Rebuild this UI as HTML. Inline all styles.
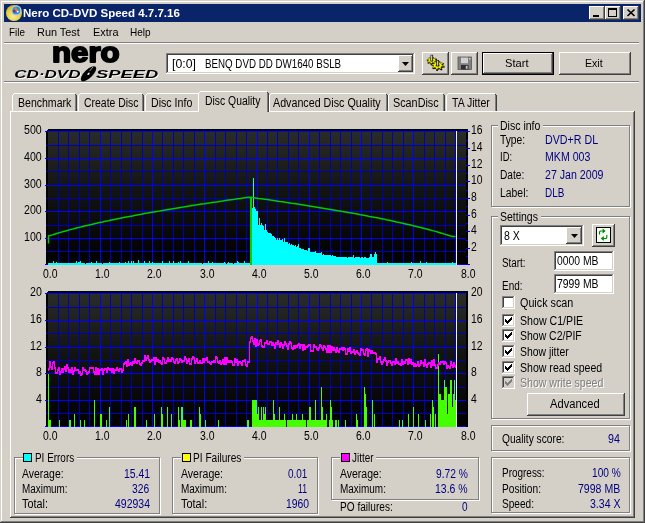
<!DOCTYPE html>
<html><head><meta charset="utf-8"><title>Nero CD-DVD Speed 4.7.7.16</title>
<style>
html,body{margin:0;padding:0;background:#d4d0c8}
#w{will-change:transform;position:relative;width:645px;height:523px;overflow:hidden;background:#d4d0c8;font-family:"Liberation Sans",Arial,sans-serif}
#w div,#w .a{position:absolute}
#w .a{display:block;overflow:visible}
.t{position:absolute;white-space:nowrap;transform-origin:0 0;display:block}
</style></head><body>
<div id="w">
<div style="left:0px;top:0px;width:645px;height:1px;background:#d4d0c8;"></div>
<div style="left:0px;top:0px;width:1px;height:523px;background:#d4d0c8;"></div>
<div style="left:1px;top:1px;width:643px;height:1px;background:#fff;"></div>
<div style="left:1px;top:1px;width:1px;height:521px;background:#fff;"></div>
<div style="left:0px;top:522px;width:645px;height:1px;background:#404040;"></div>
<div style="left:644px;top:0px;width:1px;height:523px;background:#404040;"></div>
<div style="left:1px;top:521px;width:643px;height:1px;background:#808080;"></div>
<div style="left:643px;top:1px;width:1px;height:521px;background:#808080;"></div>
<div style="left:4px;top:4px;width:637px;height:18px;background:#0a246a;"></div>
<svg class="a" style="left:4px;top:4px" width="20" height="18" viewBox="4 4 20 18">
<defs><radialGradient id="gd" cx="0.45" cy="0.7" r="0.7"><stop offset="0" stop-color="#f6eca0"/><stop offset="0.55" stop-color="#e9d43a"/><stop offset="1" stop-color="#c9b21c"/></radialGradient></defs>
<circle cx="14" cy="13" r="8" fill="url(#gd)"/>
<circle cx="16.3" cy="10.4" r="4.6" fill="#2a8fe0" stroke="#c4c8d4" stroke-width="1.3"/>
<path d="M15 7.5L17.5 11.5" stroke="#f07840" stroke-width="1.6"/><circle cx="14.2" cy="11.2" r="1.2" fill="#b02018"/>
<circle cx="18.2" cy="8.2" r="1" fill="#30a040"/><circle cx="17.8" cy="11.6" r="0.9" fill="#fff"/>
</svg>
<span class="t " style="left:22.80px;top:6px;font-size:11.5px;line-height:14px;color:#fff;font-weight:700;transform:scaleX(1.0018);">Nero CD-DVD Speed 4.7.7.16</span>
<div style="left:589px;top:6px;width:16px;height:14px;background:#d4d0c8;"></div>
<div style="left:589px;top:6px;width:16px;height:1px;background:#fff;"></div>
<div style="left:589px;top:6px;width:1px;height:14px;background:#fff;"></div>
<div style="left:589px;top:19px;width:16px;height:1px;background:#404040;"></div>
<div style="left:604px;top:6px;width:1px;height:14px;background:#404040;"></div>
<div style="left:590px;top:18px;width:14px;height:1px;background:#808080;"></div>
<div style="left:603px;top:7px;width:1px;height:12px;background:#808080;"></div>
<div style="left:605px;top:6px;width:16px;height:14px;background:#d4d0c8;"></div>
<div style="left:605px;top:6px;width:16px;height:1px;background:#fff;"></div>
<div style="left:605px;top:6px;width:1px;height:14px;background:#fff;"></div>
<div style="left:605px;top:19px;width:16px;height:1px;background:#404040;"></div>
<div style="left:620px;top:6px;width:1px;height:14px;background:#404040;"></div>
<div style="left:606px;top:18px;width:14px;height:1px;background:#808080;"></div>
<div style="left:619px;top:7px;width:1px;height:12px;background:#808080;"></div>
<div style="left:623px;top:6px;width:16px;height:14px;background:#d4d0c8;"></div>
<div style="left:623px;top:6px;width:16px;height:1px;background:#fff;"></div>
<div style="left:623px;top:6px;width:1px;height:14px;background:#fff;"></div>
<div style="left:623px;top:19px;width:16px;height:1px;background:#404040;"></div>
<div style="left:638px;top:6px;width:1px;height:14px;background:#404040;"></div>
<div style="left:624px;top:18px;width:14px;height:1px;background:#808080;"></div>
<div style="left:637px;top:7px;width:1px;height:12px;background:#808080;"></div>
<svg class="a" style="left:589px;top:6px" width="50" height="14" viewBox="589 6 50 14">
<rect x="593" y="15" width="6" height="2" fill="#000"/>
<path d="M608 8h9v9h-9zM609 10v6h7v-6z" fill="#000" fill-rule="evenodd"/>
<path d="M627.5 9.5l7 6.5M634.5 9.5l-7 6.5" stroke="#000" stroke-width="1.7" fill="none"/>
</svg>
<span class="t " style="left:8.90px;top:25px;font-size:11px;line-height:14px;color:#000;transform:scaleX(0.8958);">File</span>
<span class="t " style="left:37.20px;top:25px;font-size:11px;line-height:14px;color:#000;transform:scaleX(0.9919);">Run Test</span>
<span class="t " style="left:92.50px;top:25px;font-size:11px;line-height:14px;color:#000;transform:scaleX(0.9912);">Extra</span>
<span class="t " style="left:130.30px;top:25px;font-size:11px;line-height:14px;color:#000;transform:scaleX(0.9105);">Help</span>
<div style="left:4px;top:42px;width:635px;height:1px;background:#808080;"></div>
<div style="left:4px;top:43px;width:635px;height:1px;background:#fff;"></div>
<div style="left:4px;top:81px;width:635px;height:1px;background:#808080;"></div>
<div style="left:4px;top:82px;width:635px;height:1px;background:#fff;"></div>
<svg class="a" style="left:10px;top:44px" width="152" height="38" viewBox="10 44 152 38"><text x="52" y="62.1" font-family="Liberation Sans,sans-serif" font-weight="700" font-size="28" textLength="67.6" lengthAdjust="spacingAndGlyphs" fill="#000" stroke="#000" stroke-width="1.9" stroke-linejoin="round">nero</text><text x="15.200000000000001" y="78.8" font-family="Liberation Sans,sans-serif" font-weight="700" font-style="italic" font-size="11" textLength="66.2" lengthAdjust="spacingAndGlyphs" fill="#fff">CD·DVD</text><text x="14.3" y="78" font-family="Liberation Sans,sans-serif" font-weight="700" font-style="italic" font-size="11" textLength="66.2" lengthAdjust="spacingAndGlyphs" fill="#000">CD·DVD</text><text x="96.9" y="78.8" font-family="Liberation Sans,sans-serif" font-weight="700" font-style="italic" font-size="11" textLength="62.2" lengthAdjust="spacingAndGlyphs" fill="#fff">SPEED</text><text x="96.0" y="78" font-family="Liberation Sans,sans-serif" font-weight="700" font-style="italic" font-size="11" textLength="62.2" lengthAdjust="spacingAndGlyphs" fill="#000">SPEED</text><g transform="translate(88.5 73.8) rotate(-44)"><ellipse rx="10" ry="4.1" fill="#000"/><ellipse rx="1.5" ry="0.9" fill="#e8e8e8"/><path d="M2.5 -1.2L8 -1.8" stroke="#c8c8c8" stroke-width="0.7"/></g></svg>
<div style="left:166px;top:53px;width:249px;height:21px;background:#fff;"></div>
<div style="left:166px;top:53px;width:249px;height:1px;background:#808080;"></div>
<div style="left:166px;top:53px;width:1px;height:21px;background:#808080;"></div>
<div style="left:167px;top:54px;width:247px;height:1px;background:#404040;"></div>
<div style="left:167px;top:54px;width:1px;height:19px;background:#404040;"></div>
<div style="left:166px;top:73px;width:249px;height:1px;background:#fff;"></div>
<div style="left:414px;top:53px;width:1px;height:21px;background:#fff;"></div>
<div style="left:167px;top:72px;width:247px;height:1px;background:#d4d0c8;"></div>
<div style="left:413px;top:54px;width:1px;height:19px;background:#d4d0c8;"></div>
<div style="left:398px;top:55px;width:15px;height:17px;background:#d4d0c8;"></div>
<div style="left:398px;top:55px;width:15px;height:1px;background:#fff;"></div>
<div style="left:398px;top:55px;width:1px;height:17px;background:#fff;"></div>
<div style="left:398px;top:71px;width:15px;height:1px;background:#404040;"></div>
<div style="left:412px;top:55px;width:1px;height:17px;background:#404040;"></div>
<div style="left:399px;top:70px;width:13px;height:1px;background:#808080;"></div>
<div style="left:411px;top:56px;width:1px;height:15px;background:#808080;"></div>
<svg class="a" style="left:402.0px;top:62px" width="7" height="4"><path d="M0 0H7L3.5 4Z" fill="#000"/></svg>
<span class="t " style="left:172.20px;top:56px;font-size:12.5px;line-height:16px;color:#000;transform:scaleX(0.9805);">[0:0]</span>
<span class="t " style="left:205.40px;top:56px;font-size:12.5px;line-height:16px;color:#000;transform:scaleX(0.7805);">BENQ DVD DD DW1640 BSLB</span>
<div style="left:422px;top:52px;width:27px;height:23px;background:#d4d0c8;"></div>
<div style="left:422px;top:52px;width:27px;height:1px;background:#fff;"></div>
<div style="left:422px;top:52px;width:1px;height:23px;background:#fff;"></div>
<div style="left:422px;top:74px;width:27px;height:1px;background:#404040;"></div>
<div style="left:448px;top:52px;width:1px;height:23px;background:#404040;"></div>
<div style="left:423px;top:73px;width:25px;height:1px;background:#808080;"></div>
<div style="left:447px;top:53px;width:1px;height:21px;background:#808080;"></div>
<div style="left:451px;top:52px;width:27px;height:23px;background:#d4d0c8;"></div>
<div style="left:451px;top:52px;width:27px;height:1px;background:#fff;"></div>
<div style="left:451px;top:52px;width:1px;height:23px;background:#fff;"></div>
<div style="left:451px;top:74px;width:27px;height:1px;background:#404040;"></div>
<div style="left:477px;top:52px;width:1px;height:23px;background:#404040;"></div>
<div style="left:452px;top:73px;width:25px;height:1px;background:#808080;"></div>
<div style="left:476px;top:53px;width:1px;height:21px;background:#808080;"></div>
<svg class="a" style="left:422px;top:52px" width="56" height="23" viewBox="422 52 56 23"><path d="M437.88 61.52L437.62 62.46L435.79 62.47L435.27 63.03L435.93 64.25L434.81 64.77L433.51 63.86L432.58 63.99L431.85 65.19L430.54 65.00L430.52 63.69L429.74 63.32L428.04 63.79L427.30 63.00L428.57 62.06L428.39 61.40L426.72 60.88L426.98 59.94L428.81 59.93L429.33 59.37L428.67 58.15L429.79 57.63L431.09 58.54L432.02 58.41L432.75 57.21L434.06 57.40L434.08 58.71L434.86 59.08L436.56 58.61L437.30 59.40L436.03 60.34L436.21 61.00Z" fill="#101000"/><path d="M436.68 60.66L436.45 61.44L434.85 61.45L434.40 61.91L434.98 62.91L434.00 63.35L432.86 62.60L432.05 62.70L431.41 63.69L430.26 63.53L430.24 62.46L429.56 62.15L428.07 62.54L427.42 61.88L428.54 61.11L428.38 60.57L426.92 60.14L427.15 59.36L428.75 59.35L429.20 58.89L428.62 57.89L429.60 57.45L430.74 58.20L431.55 58.10L432.19 57.11L433.34 57.27L433.36 58.34L434.04 58.65L435.53 58.26L436.18 58.92L435.06 59.69L435.22 60.23Z" fill="#f4f000" stroke="#3a3a00" stroke-width="0.5"/><ellipse cx="431.8" cy="60.4" rx="1.57" ry="1.06" fill="#6a6a00"/><rect x="430.90" y="55.20" width="1.8" height="5.8" fill="#8a8a8a" stroke="#181818" stroke-width="0.7"/><rect x="431.20" y="55.60" width="0.7" height="5.0" fill="#f0f0f0"/><path d="M444.88 66.48L444.56 67.61L442.38 67.63L441.75 68.30L442.54 69.75L441.21 70.39L439.64 69.30L438.54 69.45L437.66 70.88L436.09 70.66L436.06 69.09L435.13 68.64L433.10 69.21L432.21 68.25L433.74 67.13L433.52 66.34L431.52 65.72L431.84 64.59L434.02 64.57L434.65 63.90L433.86 62.45L435.19 61.81L436.76 62.90L437.86 62.75L438.74 61.32L440.31 61.54L440.34 63.11L441.27 63.56L443.30 62.99L444.19 63.95L442.66 65.07L442.88 65.86Z" fill="#101000"/><path d="M443.68 65.63L443.40 66.59L441.44 66.61L440.88 67.18L441.59 68.42L440.39 68.96L438.99 68.03L438.01 68.16L437.22 69.39L435.81 69.19L435.79 67.86L434.95 67.47L433.13 67.96L432.34 67.14L433.70 66.18L433.51 65.51L431.72 64.97L432.00 64.01L433.96 63.99L434.52 63.42L433.81 62.18L435.01 61.64L436.41 62.57L437.39 62.44L438.18 61.21L439.59 61.41L439.61 62.74L440.45 63.13L442.27 62.64L443.06 63.46L441.70 64.42L441.89 65.09Z" fill="#f4f000" stroke="#3a3a00" stroke-width="0.5"/><ellipse cx="437.7" cy="65.3" rx="1.92" ry="1.31" fill="#6a6a00"/><rect x="436.70" y="60.50" width="2.0" height="5.4" fill="#8a8a8a" stroke="#181818" stroke-width="0.7"/><rect x="437.00" y="60.90" width="0.7" height="4.6000000000000005" fill="#f0f0f0"/><rect x="458" y="57" width="13.5" height="12.5" fill="#808080" stroke="#585858" stroke-width="0.8"/><rect x="461" y="57.6" width="7" height="5.6" fill="#d0d0d0"/><rect x="461" y="65" width="7.5" height="4.5" fill="#303030"/><rect x="465.8" y="65.8" width="1.8" height="3" fill="#c0c0c0"/><rect x="469.2" y="58" width="1.2" height="1.6" fill="#d8d8d8"/></svg>
<div style="left:482px;top:52px;width:72px;height:23px;background:#000;"></div>
<div style="left:483px;top:53px;width:70px;height:21px;background:#d4d0c8;"></div>
<div style="left:483px;top:53px;width:70px;height:1px;background:#fff;"></div>
<div style="left:483px;top:53px;width:1px;height:21px;background:#fff;"></div>
<div style="left:483px;top:73px;width:70px;height:1px;background:#404040;"></div>
<div style="left:552px;top:53px;width:1px;height:21px;background:#404040;"></div>
<div style="left:484px;top:72px;width:68px;height:1px;background:#808080;"></div>
<div style="left:551px;top:54px;width:1px;height:19px;background:#808080;"></div>
<span class="t " style="left:505.20px;top:56px;font-size:11px;line-height:14px;color:#000;transform:scaleX(1.0108);">Start</span>
<div style="left:559px;top:52px;width:72px;height:23px;background:#d4d0c8;"></div>
<div style="left:559px;top:52px;width:72px;height:1px;background:#fff;"></div>
<div style="left:559px;top:52px;width:1px;height:23px;background:#fff;"></div>
<div style="left:559px;top:74px;width:72px;height:1px;background:#404040;"></div>
<div style="left:630px;top:52px;width:1px;height:23px;background:#404040;"></div>
<div style="left:560px;top:73px;width:70px;height:1px;background:#808080;"></div>
<div style="left:629px;top:53px;width:1px;height:21px;background:#808080;"></div>
<span class="t " style="left:585.20px;top:56px;font-size:11px;line-height:14px;color:#000;transform:scaleX(0.9633);">Exit</span>
<div style="left:10px;top:111px;width:1px;height:407px;background:#fff;"></div>
<div style="left:10px;top:111px;width:624px;height:1px;background:#fff;"></div>
<div style="left:633px;top:112px;width:1px;height:405px;background:#808080;"></div>
<div style="left:634px;top:111px;width:1px;height:407px;background:#404040;"></div>
<div style="left:11px;top:516px;width:623px;height:1px;background:#808080;"></div>
<div style="left:10px;top:517px;width:625px;height:1px;background:#404040;"></div>
<div style="left:12px;top:93px;width:65px;height:18px;background:#d4d0c8;"></div>
<div style="left:12px;top:95px;width:1px;height:16px;background:#fff;"></div>
<div style="left:13px;top:94px;width:1px;height:1px;background:#fff;"></div>
<div style="left:14px;top:93px;width:61px;height:1px;background:#fff;"></div>
<div style="left:75px;top:95px;width:1px;height:16px;background:#808080;"></div>
<div style="left:76px;top:95px;width:1px;height:16px;background:#404040;"></div>
<div style="left:75px;top:94px;width:1px;height:1px;background:#404040;"></div>
<span class="t " style="left:18.10px;top:95px;font-size:12.5px;line-height:16px;color:#000;transform:scaleX(0.8426);">Benchmark</span>
<div style="left:78px;top:93px;width:66px;height:18px;background:#d4d0c8;"></div>
<div style="left:78px;top:95px;width:1px;height:16px;background:#fff;"></div>
<div style="left:79px;top:94px;width:1px;height:1px;background:#fff;"></div>
<div style="left:80px;top:93px;width:62px;height:1px;background:#fff;"></div>
<div style="left:142px;top:95px;width:1px;height:16px;background:#808080;"></div>
<div style="left:143px;top:95px;width:1px;height:16px;background:#404040;"></div>
<div style="left:142px;top:94px;width:1px;height:1px;background:#404040;"></div>
<span class="t " style="left:84.00px;top:95px;font-size:12.5px;line-height:16px;color:#000;transform:scaleX(0.8352);">Create Disc</span>
<div style="left:145px;top:93px;width:55px;height:18px;background:#d4d0c8;"></div>
<div style="left:145px;top:95px;width:1px;height:16px;background:#fff;"></div>
<div style="left:146px;top:94px;width:1px;height:1px;background:#fff;"></div>
<div style="left:147px;top:93px;width:51px;height:1px;background:#fff;"></div>
<div style="left:198px;top:95px;width:1px;height:16px;background:#808080;"></div>
<div style="left:199px;top:95px;width:1px;height:16px;background:#404040;"></div>
<div style="left:198px;top:94px;width:1px;height:1px;background:#404040;"></div>
<span class="t " style="left:151.20px;top:95px;font-size:12.5px;line-height:16px;color:#000;transform:scaleX(0.8494);">Disc Info</span>
<div style="left:269px;top:93px;width:119px;height:18px;background:#d4d0c8;"></div>
<div style="left:269px;top:95px;width:1px;height:16px;background:#fff;"></div>
<div style="left:270px;top:94px;width:1px;height:1px;background:#fff;"></div>
<div style="left:271px;top:93px;width:115px;height:1px;background:#fff;"></div>
<div style="left:386px;top:95px;width:1px;height:16px;background:#808080;"></div>
<div style="left:387px;top:95px;width:1px;height:16px;background:#404040;"></div>
<div style="left:386px;top:94px;width:1px;height:1px;background:#404040;"></div>
<span class="t " style="left:272.50px;top:95px;font-size:12.5px;line-height:16px;color:#000;transform:scaleX(0.8565);">Advanced Disc Quality</span>
<div style="left:388px;top:93px;width:57px;height:18px;background:#d4d0c8;"></div>
<div style="left:388px;top:95px;width:1px;height:16px;background:#fff;"></div>
<div style="left:389px;top:94px;width:1px;height:1px;background:#fff;"></div>
<div style="left:390px;top:93px;width:53px;height:1px;background:#fff;"></div>
<div style="left:443px;top:95px;width:1px;height:16px;background:#808080;"></div>
<div style="left:444px;top:95px;width:1px;height:16px;background:#404040;"></div>
<div style="left:443px;top:94px;width:1px;height:1px;background:#404040;"></div>
<span class="t " style="left:392.90px;top:95px;font-size:12.5px;line-height:16px;color:#000;transform:scaleX(0.8645);">ScanDisc</span>
<div style="left:446px;top:93px;width:51px;height:18px;background:#d4d0c8;"></div>
<div style="left:446px;top:95px;width:1px;height:16px;background:#fff;"></div>
<div style="left:447px;top:94px;width:1px;height:1px;background:#fff;"></div>
<div style="left:448px;top:93px;width:47px;height:1px;background:#fff;"></div>
<div style="left:495px;top:95px;width:1px;height:16px;background:#808080;"></div>
<div style="left:496px;top:95px;width:1px;height:16px;background:#404040;"></div>
<div style="left:495px;top:94px;width:1px;height:1px;background:#404040;"></div>
<span class="t " style="left:451.50px;top:95px;font-size:12.5px;line-height:16px;color:#000;transform:scaleX(0.8401);">TA Jitter</span>
<div style="left:198px;top:91px;width:71px;height:21px;background:#d4d0c8;"></div>
<div style="left:198px;top:93px;width:1px;height:19px;background:#fff;"></div>
<div style="left:199px;top:92px;width:1px;height:1px;background:#fff;"></div>
<div style="left:200px;top:91px;width:67px;height:1px;background:#fff;"></div>
<div style="left:267px;top:93px;width:1px;height:19px;background:#808080;"></div>
<div style="left:268px;top:93px;width:1px;height:19px;background:#404040;"></div>
<div style="left:267px;top:92px;width:1px;height:1px;background:#404040;"></div>
<span class="t " style="left:205.20px;top:93px;font-size:12.5px;line-height:16px;color:#000;transform:scaleX(0.8300);">Disc Quality</span>
<svg class="a" style="left:0;top:120px" width="490" height="325" viewBox="0 120 490 325"><defs><linearGradient id="pg" x1="0" y1="0" x2="0" y2="1"><stop offset="0" stop-color="#2a2c2a"/><stop offset="0.45" stop-color="#121412"/><stop offset="1" stop-color="#000"/></linearGradient></defs><rect x="46" y="129.0" width="422" height="136.0" fill="#000"/><rect x="48" y="131.0" width="418" height="133.5" fill="url(#pg)"/><path d="M46 129.0h2v1h-1v1h-1z" fill="#d4d0c8"/><g shape-rendering="crispEdges" fill="none" stroke-width="1"><path d="M58.5 131.0V265.0M68.5 131.0V265.0M79.5 131.0V265.0M89.5 131.0V265.0M110.5 131.0V265.0M121.5 131.0V265.0M131.5 131.0V265.0M142.5 131.0V265.0M162.5 131.0V265.0M173.5 131.0V265.0M183.5 131.0V265.0M194.5 131.0V265.0M215.5 131.0V265.0M225.5 131.0V265.0M236.5 131.0V265.0M246.5 131.0V265.0M267.5 131.0V265.0M277.5 131.0V265.0M288.5 131.0V265.0M298.5 131.0V265.0M319.5 131.0V265.0M330.5 131.0V265.0M340.5 131.0V265.0M351.5 131.0V265.0M371.5 131.0V265.0M382.5 131.0V265.0M392.5 131.0V265.0M403.5 131.0V265.0M424.5 131.0V265.0M434.5 131.0V265.0M445.5 131.0V265.0M455.5 131.0V265.0M46 145.5H466M46 171.5H466M46 198.5H466M46 225.5H466M46 251.5H466" stroke="#0000b8"/><path d="M100.5 131.0V265.0M152.5 131.0V265.0M204.5 131.0V265.0M257.5 131.0V265.0M309.5 131.0V265.0M361.5 131.0V265.0M413.5 131.0V265.0M45 131.5H466M45 158.5H466M45 185.5H466M45 211.5H466M45 238.5H466M45 264.5H466" stroke="#0000ff"/></g><rect x="46" y="291.0" width="422" height="136.0" fill="#000"/><rect x="48" y="293.0" width="418" height="133.5" fill="url(#pg)"/><path d="M46 291.0h2v1h-1v1h-1z" fill="#d4d0c8"/><g shape-rendering="crispEdges" fill="none" stroke-width="1"><path d="M58.5 293.0V427.0M68.5 293.0V427.0M79.5 293.0V427.0M89.5 293.0V427.0M110.5 293.0V427.0M121.5 293.0V427.0M131.5 293.0V427.0M142.5 293.0V427.0M162.5 293.0V427.0M173.5 293.0V427.0M183.5 293.0V427.0M194.5 293.0V427.0M215.5 293.0V427.0M225.5 293.0V427.0M236.5 293.0V427.0M246.5 293.0V427.0M267.5 293.0V427.0M277.5 293.0V427.0M288.5 293.0V427.0M298.5 293.0V427.0M319.5 293.0V427.0M330.5 293.0V427.0M340.5 293.0V427.0M351.5 293.0V427.0M371.5 293.0V427.0M382.5 293.0V427.0M392.5 293.0V427.0M403.5 293.0V427.0M424.5 293.0V427.0M434.5 293.0V427.0M445.5 293.0V427.0M455.5 293.0V427.0M46 307.5H466M46 333.5H466M46 360.5H466M46 387.5H466M46 413.5H466" stroke="#0000b8"/><path d="M100.5 293.0V427.0M152.5 293.0V427.0M204.5 293.0V427.0M257.5 293.0V427.0M309.5 293.0V427.0M361.5 293.0V427.0M413.5 293.0V427.0M45 293.5H466M45 320.5H466M45 347.5H466M45 373.5H466M45 400.5H466M45 426.5H466" stroke="#0000ff"/></g><path d="M48 265.0v-2.2h1v2.2zM49 265.0v-2.2h1v2.2zM50 265.0v-2.0h1v2.0zM51 265.0v-2.2h1v2.2zM52 265.0v-2.3h1v2.3zM53 265.0v-4.4h1v4.4zM54 265.0v-2.1h1v2.1zM55 265.0v-2.3h1v2.3zM56 265.0v-3.1h1v3.1zM57 265.0v-2.2h1v2.2zM58 265.0v-2.4h1v2.4zM59 265.0v-2.2h1v2.2zM60 265.0v-2.4h1v2.4zM61 265.0v-2.1h1v2.1zM62 265.0v-2.3h1v2.3zM63 265.0v-2.3h1v2.3zM64 265.0v-2.4h1v2.4zM65 265.0v-2.0h1v2.0zM66 265.0v-2.4h1v2.4zM67 265.0v-2.0h1v2.0zM68 265.0v-2.0h1v2.0zM69 265.0v-2.2h1v2.2zM70 265.0v-2.3h1v2.3zM71 265.0v-2.1h1v2.1zM72 265.0v-2.4h1v2.4zM73 265.0v-2.1h1v2.1zM74 265.0v-2.0h1v2.0zM75 265.0v-2.4h1v2.4zM76 265.0v-4.3h1v4.3zM77 265.0v-2.4h1v2.4zM78 265.0v-3.2h1v3.2zM79 265.0v-3.0h1v3.0zM80 265.0v-4.1h1v4.1zM81 265.0v-2.1h1v2.1zM82 265.0v-2.4h1v2.4zM83 265.0v-2.1h1v2.1zM84 265.0v-2.4h1v2.4zM85 265.0v-1.2h1v1.2zM86 265.0v-2.2h1v2.2zM87 265.0v-2.1h1v2.1zM88 265.0v-2.2h1v2.2zM89 265.0v-2.4h1v2.4zM90 265.0v-2.4h1v2.4zM91 265.0v-3.0h1v3.0zM92 265.0v-2.3h1v2.3zM93 265.0v-2.4h1v2.4zM94 265.0v-2.1h1v2.1zM95 265.0v-2.4h1v2.4zM96 265.0v-4.0h1v4.0zM97 265.0v-2.3h1v2.3zM98 265.0v-2.2h1v2.2zM99 265.0v-2.2h1v2.2zM100 265.0v-2.1h1v2.1zM101 265.0v-2.1h1v2.1zM102 265.0v-1.1h1v1.1zM103 265.0v-2.4h1v2.4zM104 265.0v-2.2h1v2.2zM105 265.0v-2.1h1v2.1zM106 265.0v-2.1h1v2.1zM107 265.0v-2.2h1v2.2zM108 265.0v-2.2h1v2.2zM109 265.0v-2.6h1v2.6zM110 265.0v-2.4h1v2.4zM111 265.0v-2.3h1v2.3zM112 265.0v-2.4h1v2.4zM113 265.0v-2.1h1v2.1zM114 265.0v-2.3h1v2.3zM115 265.0v-2.2h1v2.2zM116 265.0v-2.2h1v2.2zM117 265.0v-2.4h1v2.4zM118 265.0v-2.4h1v2.4zM119 265.0v-3.3h1v3.3zM120 265.0v-2.4h1v2.4zM121 265.0v-2.3h1v2.3zM122 265.0v-2.1h1v2.1zM123 265.0v-2.4h1v2.4zM124 265.0v-2.2h1v2.2zM125 265.0v-2.8h1v2.8zM126 265.0v-2.2h1v2.2zM127 265.0v-2.4h1v2.4zM128 265.0v-4.0h1v4.0zM129 265.0v-2.2h1v2.2zM130 265.0v-2.1h1v2.1zM131 265.0v-3.8h1v3.8zM132 265.0v-2.4h1v2.4zM133 265.0v-4.3h1v4.3zM134 265.0v-2.3h1v2.3zM135 265.0v-2.2h1v2.2zM136 265.0v-2.0h1v2.0zM137 265.0v-2.3h1v2.3zM138 265.0v-5.4h1v5.4zM139 265.0v-2.3h1v2.3zM140 265.0v-2.1h1v2.1zM141 265.0v-2.4h1v2.4zM142 265.0v-2.4h1v2.4zM143 265.0v-2.3h1v2.3zM144 265.0v-3.9h1v3.9zM145 265.0v-2.1h1v2.1zM146 265.0v-2.1h1v2.1zM147 265.0v-2.1h1v2.1zM148 265.0v-2.4h1v2.4zM149 265.0v-4.3h1v4.3zM150 265.0v-2.2h1v2.2zM151 265.0v-2.0h1v2.0zM152 265.0v-3.2h1v3.2zM153 265.0v-2.2h1v2.2zM154 265.0v-2.4h1v2.4zM155 265.0v-2.1h1v2.1zM156 265.0v-2.4h1v2.4zM157 265.0v-2.4h1v2.4zM158 265.0v-2.4h1v2.4zM159 265.0v-2.4h1v2.4zM160 265.0v-2.0h1v2.0zM161 265.0v-2.4h1v2.4zM162 265.0v-4.4h1v4.4zM163 265.0v-2.3h1v2.3zM164 265.0v-2.0h1v2.0zM165 265.0v-2.1h1v2.1zM166 265.0v-2.4h1v2.4zM167 265.0v-2.3h1v2.3zM168 265.0v-2.1h1v2.1zM169 265.0v-4.3h1v4.3zM170 265.0v-2.1h1v2.1zM171 265.0v-2.1h1v2.1zM172 265.0v-2.1h1v2.1zM173 265.0v-3.8h1v3.8zM174 265.0v-2.2h1v2.2zM175 265.0v-2.1h1v2.1zM176 265.0v-2.4h1v2.4zM177 265.0v-2.4h1v2.4zM178 265.0v-3.0h1v3.0zM179 265.0v-2.2h1v2.2zM180 265.0v-4.2h1v4.2zM181 265.0v-2.4h1v2.4zM182 265.0v-2.2h1v2.2zM183 265.0v-2.2h1v2.2zM184 265.0v-2.1h1v2.1zM185 265.0v-2.1h1v2.1zM186 265.0v-2.2h1v2.2zM187 265.0v-2.3h1v2.3zM188 265.0v-4.1h1v4.1zM189 265.0v-2.3h1v2.3zM190 265.0v-2.1h1v2.1zM191 265.0v-2.3h1v2.3zM192 265.0v-2.1h1v2.1zM193 265.0v-2.1h1v2.1zM194 265.0v-2.1h1v2.1zM195 265.0v-2.1h1v2.1zM196 265.0v-2.1h1v2.1zM197 265.0v-2.4h1v2.4zM198 265.0v-2.2h1v2.2zM199 265.0v-2.1h1v2.1zM200 265.0v-2.3h1v2.3zM201 265.0v-2.1h1v2.1zM202 265.0v-1.3h1v1.3zM203 265.0v-2.3h1v2.3zM204 265.0v-2.0h1v2.0zM205 265.0v-2.4h1v2.4zM206 265.0v-2.1h1v2.1zM207 265.0v-2.3h1v2.3zM208 265.0v-4.1h1v4.1zM209 265.0v-2.3h1v2.3zM210 265.0v-2.3h1v2.3zM211 265.0v-2.2h1v2.2zM212 265.0v-3.5h1v3.5zM213 265.0v-2.3h1v2.3zM214 265.0v-2.1h1v2.1zM215 265.0v-2.0h1v2.0zM216 265.0v-2.1h1v2.1zM217 265.0v-2.0h1v2.0zM218 265.0v-2.1h1v2.1zM219 265.0v-2.1h1v2.1zM220 265.0v-2.1h1v2.1zM221 265.0v-2.4h1v2.4zM222 265.0v-2.2h1v2.2zM223 265.0v-2.2h1v2.2zM224 265.0v-3.4h1v3.4zM225 265.0v-2.3h1v2.3zM226 265.0v-1.0h1v1.0zM227 265.0v-2.3h1v2.3zM228 265.0v-3.3h1v3.3zM229 265.0v-2.1h1v2.1zM230 265.0v-2.4h1v2.4zM231 265.0v-2.2h1v2.2zM232 265.0v-2.2h1v2.2zM233 265.0v-1.3h1v1.3zM234 265.0v-2.0h1v2.0zM235 265.0v-2.4h1v2.4zM236 265.0v-2.3h1v2.3zM237 265.0v-3.9h1v3.9zM238 265.0v-3.5h1v3.5zM239 265.0v-2.4h1v2.4zM240 265.0v-2.2h1v2.2zM241 265.0v-2.3h1v2.3zM242 265.0v-2.2h1v2.2zM243 265.0v-2.1h1v2.1zM244 265.0v-3.6h1v3.6zM245 265.0v-2.4h1v2.4zM246 265.0v-2.1h1v2.1zM247 265.0v-2.1h1v2.1zM248 265.0v-2.3h1v2.3zM249 265.0v-2.4h1v2.4zM252 265.0v-56.7h1v56.7zM253 265.0v-86.7h1v86.7zM254 265.0v-57.7h1v57.7zM255 265.0v-56.0h1v56.0zM256 265.0v-53.9h1v53.9zM257 265.0v-54.1h1v54.1zM258 265.0v-39.9h1v39.9zM259 265.0v-47.5h1v47.5zM260 265.0v-39.9h1v39.9zM261 265.0v-42.3h1v42.3zM262 265.0v-40.3h1v40.3zM263 265.0v-38.9h1v38.9zM264 265.0v-35.4h1v35.4zM265 265.0v-40.7h1v40.7zM266 265.0v-35.3h1v35.3zM267 265.0v-33.4h1v33.4zM268 265.0v-31.9h1v31.9zM269 265.0v-32.5h1v32.5zM270 265.0v-31.6h1v31.6zM271 265.0v-30.8h1v30.8zM272 265.0v-28.6h1v28.6zM273 265.0v-29.3h1v29.3zM274 265.0v-27.6h1v27.6zM275 265.0v-27.0h1v27.0zM276 265.0v-25.2h1v25.2zM277 265.0v-26.8h1v26.8zM278 265.0v-25.2h1v25.2zM279 265.0v-26.9h1v26.9zM280 265.0v-25.4h1v25.4zM281 265.0v-24.7h1v24.7zM282 265.0v-26.0h1v26.0zM283 265.0v-23.4h1v23.4zM284 265.0v-26.6h1v26.6zM285 265.0v-23.4h1v23.4zM286 265.0v-23.0h1v23.0zM287 265.0v-22.8h1v22.8zM288 265.0v-21.2h1v21.2zM289 265.0v-22.3h1v22.3zM290 265.0v-20.5h1v20.5zM291 265.0v-20.7h1v20.7zM292 265.0v-19.7h1v19.7zM293 265.0v-20.1h1v20.1zM294 265.0v-18.7h1v18.7zM295 265.0v-19.8h1v19.8zM296 265.0v-18.0h1v18.0zM297 265.0v-19.1h1v19.1zM298 265.0v-20.8h1v20.8zM299 265.0v-17.0h1v17.0zM300 265.0v-17.1h1v17.1zM301 265.0v-15.9h1v15.9zM302 265.0v-15.7h1v15.7zM303 265.0v-16.5h1v16.5zM304 265.0v-15.0h1v15.0zM305 265.0v-15.0h1v15.0zM306 265.0v-14.7h1v14.7zM307 265.0v-14.1h1v14.1zM308 265.0v-16.7h1v16.7zM309 265.0v-16.9h1v16.9zM310 265.0v-13.0h1v13.0zM311 265.0v-13.4h1v13.4zM312 265.0v-12.7h1v12.7zM313 265.0v-12.9h1v12.9zM314 265.0v-12.8h1v12.8zM315 265.0v-14.0h1v14.0zM316 265.0v-12.1h1v12.1zM317 265.0v-12.3h1v12.3zM318 265.0v-11.7h1v11.7zM319 265.0v-11.9h1v11.9zM320 265.0v-12.5h1v12.5zM321 265.0v-12.9h1v12.9zM322 265.0v-10.4h1v10.4zM323 265.0v-11.1h1v11.1zM324 265.0v-10.0h1v10.0zM325 265.0v-10.2h1v10.2zM326 265.0v-9.7h1v9.7zM327 265.0v-10.5h1v10.5zM328 265.0v-10.1h1v10.1zM329 265.0v-10.1h1v10.1zM330 265.0v-9.9h1v9.9zM331 265.0v-8.8h1v8.8zM332 265.0v-10.3h1v10.3zM333 265.0v-9.1h1v9.1zM334 265.0v-9.0h1v9.0zM335 265.0v-8.7h1v8.7zM336 265.0v-8.2h1v8.2zM337 265.0v-7.8h1v7.8zM338 265.0v-8.1h1v8.1zM339 265.0v-7.6h1v7.6zM340 265.0v-7.7h1v7.7zM341 265.0v-8.2h1v8.2zM342 265.0v-7.7h1v7.7zM343 265.0v-7.6h1v7.6zM344 265.0v-8.1h1v8.1zM345 265.0v-8.3h1v8.3zM346 265.0v-8.0h1v8.0zM347 265.0v-7.5h1v7.5zM348 265.0v-8.0h1v8.0zM349 265.0v-8.1h1v8.1zM350 265.0v-8.3h1v8.3zM351 265.0v-7.7h1v7.7zM352 265.0v-7.7h1v7.7zM353 265.0v-10.0h1v10.0zM354 265.0v-7.5h1v7.5zM355 265.0v-8.2h1v8.2zM356 265.0v-7.8h1v7.8zM357 265.0v-7.6h1v7.6zM358 265.0v-7.8h1v7.8zM359 265.0v-7.6h1v7.6zM360 265.0v-7.3h1v7.3zM361 265.0v-7.7h1v7.7zM362 265.0v-8.3h1v8.3zM363 265.0v-7.4h1v7.4zM364 265.0v-7.7h1v7.7zM365 265.0v-7.8h1v7.8zM366 265.0v-7.3h1v7.3zM367 265.0v-7.5h1v7.5zM368 265.0v-7.3h1v7.3zM369 265.0v-8.1h1v8.1zM370 265.0v-10.8h1v10.8zM371 265.0v-11.1h1v11.1zM372 265.0v-7.9h1v7.9zM373 265.0v-8.0h1v8.0zM374 265.0v-10.6h1v10.6zM375 265.0v-12.6h1v12.6zM376 265.0v-11.1h1v11.1zM377 265.0v-2.1h1v2.1zM378 265.0v-2.3h1v2.3zM379 265.0v-2.4h1v2.4zM380 265.0v-2.2h1v2.2zM381 265.0v-2.1h1v2.1zM382 265.0v-2.4h1v2.4zM383 265.0v-2.1h1v2.1zM384 265.0v-2.4h1v2.4zM385 265.0v-2.4h1v2.4zM386 265.0v-2.2h1v2.2zM387 265.0v-3.5h1v3.5zM388 265.0v-2.4h1v2.4zM389 265.0v-2.4h1v2.4zM390 265.0v-2.2h1v2.2zM391 265.0v-2.2h1v2.2zM392 265.0v-2.3h1v2.3zM393 265.0v-2.3h1v2.3zM394 265.0v-2.2h1v2.2zM395 265.0v-2.1h1v2.1zM396 265.0v-2.2h1v2.2zM397 265.0v-2.4h1v2.4zM398 265.0v-2.2h1v2.2zM399 265.0v-2.2h1v2.2zM400 265.0v-2.4h1v2.4zM401 265.0v-2.3h1v2.3zM402 265.0v-2.4h1v2.4zM403 265.0v-2.4h1v2.4zM404 265.0v-2.4h1v2.4zM405 265.0v-2.3h1v2.3zM406 265.0v-2.2h1v2.2zM407 265.0v-2.3h1v2.3zM408 265.0v-2.4h1v2.4zM409 265.0v-2.1h1v2.1zM410 265.0v-2.4h1v2.4zM411 265.0v-3.0h1v3.0zM412 265.0v-2.3h1v2.3zM413 265.0v-2.3h1v2.3zM414 265.0v-2.1h1v2.1zM415 265.0v-2.2h1v2.2zM416 265.0v-2.4h1v2.4zM417 265.0v-2.1h1v2.1zM418 265.0v-2.4h1v2.4zM419 265.0v-2.1h1v2.1zM420 265.0v-4.3h1v4.3zM421 265.0v-2.4h1v2.4zM422 265.0v-2.4h1v2.4zM423 265.0v-2.2h1v2.2zM424 265.0v-2.1h1v2.1zM425 265.0v-2.2h1v2.2zM426 265.0v-3.4h1v3.4zM427 265.0v-2.2h1v2.2zM428 265.0v-2.2h1v2.2zM429 265.0v-2.4h1v2.4zM430 265.0v-2.4h1v2.4zM431 265.0v-2.1h1v2.1zM432 265.0v-2.2h1v2.2zM433 265.0v-2.2h1v2.2zM434 265.0v-2.3h1v2.3zM435 265.0v-2.4h1v2.4zM436 265.0v-2.4h1v2.4zM437 265.0v-2.1h1v2.1zM438 265.0v-2.4h1v2.4zM439 265.0v-2.1h1v2.1zM440 265.0v-2.3h1v2.3zM441 265.0v-2.1h1v2.1zM442 265.0v-2.2h1v2.2zM443 265.0v-2.2h1v2.2zM444 265.0v-2.2h1v2.2zM445 265.0v-2.3h1v2.3zM446 265.0v-2.1h1v2.1zM447 265.0v-2.1h1v2.1zM448 265.0v-2.3h1v2.3zM449 265.0v-2.3h1v2.3zM450 265.0v-2.2h1v2.2zM451 265.0v-2.4h1v2.4zM452 265.0v-3.5h1v3.5zM453 265.0v-2.2h1v2.2zM454 265.0v-2.3h1v2.3zM455 265.0v-2.4h1v2.4z" fill="#00ffff" shape-rendering="crispEdges"/><polyline fill="none" stroke="#00cc00" stroke-width="1.5" points="48.5,243.5 48.5,236.1 51.5,235.1 54.5,234.2 57.5,233.3 60.5,232.4 63.5,231.5 66.5,230.7 69.5,229.9 72.5,229.1 75.5,228.3 78.5,227.6 81.5,226.8 84.5,226.1 87.5,225.4 90.5,224.7 93.5,224.0 96.5,223.3 99.5,222.6 102.5,222.0 105.5,221.3 108.5,220.7 111.5,220.0 114.5,219.4 117.5,218.8 120.5,218.2 123.5,217.6 126.5,217.0 129.5,216.4 132.5,215.9 135.5,215.3 138.5,214.7 141.5,214.2 144.5,213.6 147.5,213.1 150.5,212.5 153.5,212.0 156.5,211.5 159.5,211.0 162.5,210.4 165.5,209.9 168.5,209.4 171.5,208.9 174.5,208.4 177.5,207.9 180.5,207.4 183.5,207.0 186.5,206.5 189.5,206.0 192.5,205.5 195.5,205.1 198.5,204.6 201.5,204.1 204.5,203.7 207.5,203.2 210.5,202.8 213.5,202.3 216.5,201.9 219.5,201.4 222.5,201.0 225.5,200.5 228.5,200.1 231.5,199.7 234.5,199.3 237.5,198.8 240.5,198.4 243.5,198.0 246.5,197.6 249.5,197.2 252.5,197.5 255.5,197.9 258.5,198.4 261.5,198.8 264.5,199.2 267.5,199.6 270.5,200.1 273.5,200.5 276.5,200.9 279.5,201.4 282.5,201.8 285.5,202.3 288.5,202.7 291.5,203.2 294.5,203.6 297.5,204.1 300.5,204.5 303.5,205.0 306.5,205.5 309.5,205.9 312.5,206.4 315.5,206.9 318.5,207.4 321.5,207.9 324.5,208.4 327.5,208.9 330.5,209.4 333.5,209.9 336.5,210.4 339.5,210.9 342.5,211.4 345.5,211.9 348.5,212.5 351.5,213.0 354.5,213.6 357.5,214.1 360.5,214.7 363.5,215.2 366.5,215.8 369.5,216.4 372.5,216.9 375.5,217.5 378.5,218.1 381.5,218.7 384.5,219.3 387.5,220.0 390.5,220.6 393.5,221.2 396.5,221.9 399.5,222.5 402.5,223.2 405.5,223.9 408.5,224.6 411.5,225.3 414.5,226.0 417.5,226.7 420.5,227.5 423.5,228.2 426.5,229.0 429.5,229.8 432.5,230.6 435.5,231.4 438.5,232.3 441.5,233.2 444.5,234.1 447.5,235.0 450.5,236.0 453.5,236.6 455.5,236.6"/><rect x="250" y="197.5" width="2" height="67.5" fill="#00d000"/><rect x="456" y="131" width="1" height="134" fill="#f0f0f0"/><path d="M466 264.5H470M466 256.5H468M466 248.5H470M466 240.5H468M466 231.5H470M466 223.5H468M466 215.5H470M466 206.5H468M466 198.5H470M466 190.5H468M466 181.5H470M466 173.5H468M466 165.5H470M466 156.5H468M466 148.5H470M466 140.5H468M466 131.5H470" stroke="#0000ff" stroke-width="1" shape-rendering="crispEdges"/><path d="M48 427.0v-53.2h1v53.2zM49 427.0v-6.7h1v6.7zM50 427.0v-6.7h1v6.7zM59 427.0v-6.7h1v6.7zM69 427.0v-6.7h1v6.7zM70 427.0v-6.7h1v6.7zM74 427.0v-13.3h1v13.3zM80 427.0v-6.7h1v6.7zM84 427.0v-6.7h1v6.7zM94 427.0v-26.6h1v26.6zM100 427.0v-13.3h1v13.3zM101 427.0v-13.3h1v13.3zM106 427.0v-6.7h1v6.7zM109 427.0v-20.0h1v20.0zM126 427.0v-6.7h1v6.7zM128 427.0v-13.3h1v13.3zM134 427.0v-20.0h1v20.0zM135 427.0v-20.0h1v20.0zM146 427.0v-6.7h1v6.7zM154 427.0v-13.3h1v13.3zM161 427.0v-20.0h1v20.0zM162 427.0v-13.3h1v13.3zM167 427.0v-20.0h1v20.0zM171 427.0v-13.3h1v13.3zM178 427.0v-20.0h1v20.0zM179 427.0v-6.7h1v6.7zM181 427.0v-20.0h1v20.0zM182 427.0v-20.0h1v20.0zM183 427.0v-6.7h1v6.7zM184 427.0v-6.7h1v6.7zM185 427.0v-6.7h1v6.7zM190 427.0v-6.7h1v6.7zM191 427.0v-6.7h1v6.7zM199 427.0v-20.0h1v20.0zM200 427.0v-13.3h1v13.3zM205 427.0v-6.7h1v6.7zM218 427.0v-6.7h1v6.7zM247 427.0v-6.7h1v6.7zM248 427.0v-6.7h1v6.7zM252 427.0v-26.6h1v26.6zM253 427.0v-26.6h1v26.6zM254 427.0v-26.6h1v26.6zM255 427.0v-26.6h1v26.6zM256 427.0v-26.6h1v26.6zM257 427.0v-13.3h1v13.3zM258 427.0v-20.0h1v20.0zM259 427.0v-6.7h1v6.7zM260 427.0v-6.7h1v6.7zM261 427.0v-20.0h1v20.0zM262 427.0v-6.7h1v6.7zM263 427.0v-20.0h1v20.0zM264 427.0v-13.3h1v13.3zM265 427.0v-20.0h1v20.0zM266 427.0v-6.7h1v6.7zM267 427.0v-6.7h1v6.7zM268 427.0v-6.7h1v6.7zM269 427.0v-6.7h1v6.7zM270 427.0v-6.7h1v6.7zM271 427.0v-6.7h1v6.7zM272 427.0v-6.7h1v6.7zM273 427.0v-26.6h1v26.6zM274 427.0v-13.3h1v13.3zM275 427.0v-6.7h1v6.7zM276 427.0v-6.7h1v6.7zM277 427.0v-6.7h1v6.7zM278 427.0v-6.7h1v6.7zM279 427.0v-20.0h1v20.0zM280 427.0v-6.7h1v6.7zM281 427.0v-6.7h1v6.7zM282 427.0v-6.7h1v6.7zM283 427.0v-6.7h1v6.7zM284 427.0v-13.3h1v13.3zM285 427.0v-6.7h1v6.7zM287 427.0v-6.7h1v6.7zM288 427.0v-6.7h1v6.7zM289 427.0v-6.7h1v6.7zM290 427.0v-6.7h1v6.7zM291 427.0v-6.7h1v6.7zM292 427.0v-13.3h1v13.3zM293 427.0v-6.7h1v6.7zM294 427.0v-6.7h1v6.7zM295 427.0v-6.7h1v6.7zM296 427.0v-13.3h1v13.3zM297 427.0v-6.7h1v6.7zM298 427.0v-6.7h1v6.7zM299 427.0v-6.7h1v6.7zM300 427.0v-6.7h1v6.7zM301 427.0v-6.7h1v6.7zM302 427.0v-13.3h1v13.3zM303 427.0v-6.7h1v6.7zM304 427.0v-6.7h1v6.7zM305 427.0v-6.7h1v6.7zM307 427.0v-6.7h1v6.7zM308 427.0v-6.7h1v6.7zM309 427.0v-20.0h1v20.0zM310 427.0v-20.0h1v20.0zM311 427.0v-6.7h1v6.7zM312 427.0v-6.7h1v6.7zM313 427.0v-6.7h1v6.7zM314 427.0v-6.7h1v6.7zM315 427.0v-26.6h1v26.6zM316 427.0v-6.7h1v6.7zM317 427.0v-6.7h1v6.7zM318 427.0v-6.7h1v6.7zM319 427.0v-6.7h1v6.7zM320 427.0v-6.7h1v6.7zM321 427.0v-39.9h1v39.9zM322 427.0v-20.0h1v20.0zM323 427.0v-6.7h1v6.7zM324 427.0v-6.7h1v6.7zM325 427.0v-6.7h1v6.7zM326 427.0v-13.3h1v13.3zM329 427.0v-6.7h1v6.7zM330 427.0v-26.6h1v26.6zM331 427.0v-20.0h1v20.0zM332 427.0v-6.7h1v6.7zM335 427.0v-6.7h1v6.7zM336 427.0v-6.7h1v6.7zM338 427.0v-6.7h1v6.7zM345 427.0v-6.7h1v6.7zM356 427.0v-13.3h1v13.3zM357 427.0v-6.7h1v6.7zM364 427.0v-39.9h1v39.9zM365 427.0v-33.2h1v33.2zM366 427.0v-20.0h1v20.0zM372 427.0v-26.6h1v26.6zM374 427.0v-13.3h1v13.3zM399 427.0v-6.7h1v6.7zM402 427.0v-6.7h1v6.7zM408 427.0v-13.3h1v13.3zM413 427.0v-20.0h1v20.0zM418 427.0v-13.3h1v13.3zM425 427.0v-6.7h1v6.7zM430 427.0v-13.3h1v13.3zM432 427.0v-26.6h1v26.6zM433 427.0v-20.0h1v20.0zM435 427.0v-13.3h1v13.3zM438 427.0v-73.2h1v73.2zM439 427.0v-33.2h1v33.2zM440 427.0v-33.2h1v33.2zM441 427.0v-26.6h1v26.6zM442 427.0v-26.6h1v26.6zM443 427.0v-26.6h1v26.6zM444 427.0v-46.6h1v46.6zM445 427.0v-39.9h1v39.9zM446 427.0v-39.9h1v39.9zM447 427.0v-13.3h1v13.3zM448 427.0v-33.2h1v33.2zM449 427.0v-33.2h1v33.2zM450 427.0v-46.6h1v46.6zM451 427.0v-46.6h1v46.6zM452 427.0v-20.0h1v20.0zM453 427.0v-33.2h1v33.2zM454 427.0v-46.6h1v46.6zM455 427.0v-26.6h1v26.6z" fill="#44ff00" shape-rendering="crispEdges"/><path d="M48 368v3h1v-3zM49 361v9h1v-9zM50 361v7h1v-7zM51 366v4h1v-4zM52 362v8h1v-8zM53 361v3h1v-3zM54 361v8h1v-8zM55 367v7h1v-7zM56 372v2h1v-2zM57 369v5h1v-5zM58 367v4h1v-4zM59 367v8h1v-8zM60 371v4h1v-4zM61 368v5h1v-5zM62 368v5h1v-5zM63 368v5h1v-5zM64 366v4h1v-4zM65 366v6h1v-6zM66 364v8h1v-8zM67 364v5h1v-5zM68 367v6h1v-6zM69 369v4h1v-4zM70 369v4h1v-4zM71 367v6h1v-6zM72 367v8h1v-8zM73 370v5h1v-5zM74 367v5h1v-5zM75 367v4h1v-4zM76 369v2h1v-2zM77 369v2h1v-2zM78 369v5h1v-5zM79 371v3h1v-3zM80 371v5h1v-5zM81 373v3h1v-3zM82 367v8h1v-8zM83 367v4h1v-4zM84 369v2h1v-2zM85 369v3h1v-3zM86 370v5h1v-5zM87 372v3h1v-3zM88 371v3h1v-3zM89 367v6h1v-6zM90 367v2h1v-2zM91 367v2h1v-2zM92 367v2h1v-2zM93 367v6h1v-6zM94 371v4h1v-4zM95 367v8h1v-8zM96 367v8h1v-8zM97 368v7h1v-7zM98 368v7h1v-7zM99 369v6h1v-6zM100 369v2h1v-2zM101 368v3h1v-3zM102 368v7h1v-7zM103 369v6h1v-6zM104 368v3h1v-3zM105 368v2h1v-2zM106 368v5h1v-5zM107 367v6h1v-6zM108 367v3h1v-3zM109 368v3h1v-3zM110 368v3h1v-3zM111 368v5h1v-5zM112 368v5h1v-5zM113 368v6h1v-6zM114 369v5h1v-5zM115 369v2h1v-2zM116 367v4h1v-4zM117 367v4h1v-4zM118 369v3h1v-3zM119 368v4h1v-4zM120 368v2h1v-2zM121 368v5h1v-5zM122 369v4h1v-4zM123 363v8h1v-8zM124 362v3h1v-3zM125 361v3h1v-3zM126 361v6h1v-6zM127 359v8h1v-8zM128 359v7h1v-7zM129 363v3h1v-3zM130 362v3h1v-3zM131 362v4h1v-4zM132 361v5h1v-5zM133 361v3h1v-3zM134 358v6h1v-6zM135 358v5h1v-5zM136 361v3h1v-3zM137 360v4h1v-4zM138 360v2h1v-2zM139 360v5h1v-5zM140 363v3h1v-3zM141 362v4h1v-4zM142 360v4h1v-4zM143 360v2h1v-2zM144 355v7h1v-7zM145 355v6h1v-6zM146 357v4h1v-4zM147 355v4h1v-4zM148 355v6h1v-6zM149 359v4h1v-4zM150 360v3h1v-3zM151 359v3h1v-3zM152 359v2h1v-2zM153 357v4h1v-4zM154 357v8h1v-8zM155 357v8h1v-8zM156 357v5h1v-5zM157 359v3h1v-3zM158 359v4h1v-4zM159 360v3h1v-3zM160 360v4h1v-4zM161 362v3h1v-3zM162 357v8h1v-8zM163 357v3h1v-3zM164 358v6h1v-6zM165 362v2h1v-2zM166 360v4h1v-4zM167 357v5h1v-5zM168 357v5h1v-5zM169 359v3h1v-3zM170 359v3h1v-3zM171 357v5h1v-5zM172 357v3h1v-3zM173 358v5h1v-5zM174 361v3h1v-3zM175 359v5h1v-5zM176 358v3h1v-3zM177 358v6h1v-6zM178 361v3h1v-3zM179 358v5h1v-5zM180 358v3h1v-3zM181 359v4h1v-4zM182 360v3h1v-3zM183 360v2h1v-2zM184 356v6h1v-6zM185 356v4h1v-4zM186 358v6h1v-6zM187 360v4h1v-4zM188 358v4h1v-4zM189 358v7h1v-7zM190 363v2h1v-2zM191 358v7h1v-7zM192 356v4h1v-4zM193 356v3h1v-3zM194 357v7h1v-7zM195 360v4h1v-4zM196 358v4h1v-4zM197 358v6h1v-6zM198 362v2h1v-2zM199 360v4h1v-4zM200 360v4h1v-4zM201 362v2h1v-2zM202 358v6h1v-6zM203 358v5h1v-5zM204 358v5h1v-5zM205 358v3h1v-3zM206 357v4h1v-4zM207 357v6h1v-6zM208 361v2h1v-2zM209 361v3h1v-3zM210 362v3h1v-3zM211 361v4h1v-4zM212 361v2h1v-2zM213 360v3h1v-3zM214 360v3h1v-3zM215 356v7h1v-7zM216 356v3h1v-3zM217 357v6h1v-6zM218 361v3h1v-3zM219 360v4h1v-4zM220 360v5h1v-5zM221 362v3h1v-3zM222 359v5h1v-5zM223 359v6h1v-6zM224 357v8h1v-8zM225 357v8h1v-8zM226 357v8h1v-8zM227 357v6h1v-6zM228 360v3h1v-3zM229 360v3h1v-3zM230 360v3h1v-3zM231 360v3h1v-3zM232 361v5h1v-5zM233 364v2h1v-2zM234 358v8h1v-8zM235 358v5h1v-5zM236 359v4h1v-4zM237 359v7h1v-7zM238 361v5h1v-5zM239 361v2h1v-2zM240 361v3h1v-3zM241 362v4h1v-4zM242 360v6h1v-6zM243 360v2h1v-2zM244 359v3h1v-3zM245 359v7h1v-7zM246 364v3h1v-3zM247 361v6h1v-6zM248 361v2h1v-2zM249 341v22h1v-22zM250 337v6h1v-6zM251 336v3h1v-3zM252 336v6h1v-6zM253 340v5h1v-5zM254 338v7h1v-7zM255 338v9h1v-9zM256 339v8h1v-8zM257 339v7h1v-7zM258 343v3h1v-3zM259 340v5h1v-5zM260 339v3h1v-3zM261 339v8h1v-8zM262 345v3h1v-3zM263 346v2h1v-2zM264 342v6h1v-6zM265 342v2h1v-2zM266 340v4h1v-4zM267 340v5h1v-5zM268 343v2h1v-2zM269 341v4h1v-4zM270 341v2h1v-2zM271 341v5h1v-5zM272 342v4h1v-4zM273 342v4h1v-4zM274 344v5h1v-5zM275 342v7h1v-7zM276 342v3h1v-3zM277 340v5h1v-5zM278 340v5h1v-5zM279 343v5h1v-5zM280 342v6h1v-6zM281 342v4h1v-4zM282 344v5h1v-5zM283 344v5h1v-5zM284 341v5h1v-5zM285 341v4h1v-4zM286 343v4h1v-4zM287 345v5h1v-5zM288 343v7h1v-7zM289 341v4h1v-4zM290 341v3h1v-3zM291 342v7h1v-7zM292 347v3h1v-3zM293 345v5h1v-5zM294 345v4h1v-4zM295 345v4h1v-4zM296 345v3h1v-3zM297 344v4h1v-4zM298 343v3h1v-3zM299 343v6h1v-6zM300 344v5h1v-5zM301 344v2h1v-2zM302 344v7h1v-7zM303 344v7h1v-7zM304 344v6h1v-6zM305 346v4h1v-4zM306 346v2h1v-2zM307 345v3h1v-3zM308 344v3h1v-3zM309 344v2h1v-2zM310 344v8h1v-8zM311 350v2h1v-2zM312 350v2h1v-2zM313 344v8h1v-8zM314 344v4h1v-4zM315 346v2h1v-2zM316 346v4h1v-4zM317 348v3h1v-3zM318 347v4h1v-4zM319 344v5h1v-5zM320 344v3h1v-3zM321 345v4h1v-4zM322 347v4h1v-4zM323 345v6h1v-6zM324 345v3h1v-3zM325 346v4h1v-4zM326 348v5h1v-5zM327 345v8h1v-8zM328 345v8h1v-8zM329 345v8h1v-8zM330 345v8h1v-8zM331 346v7h1v-7zM332 346v5h1v-5zM333 347v4h1v-4zM334 347v4h1v-4zM335 349v4h1v-4zM336 347v6h1v-6zM337 347v5h1v-5zM338 350v3h1v-3zM339 348v5h1v-5zM340 348v2h1v-2zM341 347v3h1v-3zM342 347v4h1v-4zM343 347v4h1v-4zM344 347v3h1v-3zM345 348v7h1v-7zM346 353v2h1v-2zM347 348v7h1v-7zM348 348v4h1v-4zM349 347v5h1v-5zM350 347v7h1v-7zM351 351v3h1v-3zM352 351v2h1v-2zM353 349v4h1v-4zM354 349v6h1v-6zM355 351v4h1v-4zM356 350v3h1v-3zM357 350v4h1v-4zM358 352v3h1v-3zM359 353v3h1v-3zM360 348v8h1v-8zM361 348v3h1v-3zM362 349v2h1v-2zM363 349v6h1v-6zM364 353v3h1v-3zM365 349v7h1v-7zM366 348v3h1v-3zM367 348v9h1v-9zM368 349v8h1v-8zM369 349v3h1v-3zM370 350v4h1v-4zM371 350v4h1v-4zM372 350v4h1v-4zM373 352v2h1v-2zM374 352v2h1v-2zM375 352v3h1v-3zM376 353v10h1v-10zM377 358v5h1v-5zM378 358v2h1v-2zM379 356v4h1v-4zM380 356v7h1v-7zM381 361v4h1v-4zM382 361v4h1v-4zM383 359v4h1v-4zM384 357v4h1v-4zM385 357v5h1v-5zM386 360v6h1v-6zM387 361v5h1v-5zM388 360v3h1v-3zM389 360v2h1v-2zM390 360v4h1v-4zM391 362v4h1v-4zM392 361v5h1v-5zM393 361v2h1v-2zM394 361v4h1v-4zM395 358v7h1v-7zM396 358v6h1v-6zM397 361v3h1v-3zM398 361v4h1v-4zM399 363v2h1v-2zM400 363v3h1v-3zM401 359v7h1v-7zM402 359v6h1v-6zM403 361v4h1v-4zM404 361v3h1v-3zM405 359v5h1v-5zM406 359v2h1v-2zM407 359v6h1v-6zM408 358v7h1v-7zM409 358v6h1v-6zM410 359v5h1v-5zM411 359v6h1v-6zM412 362v3h1v-3zM413 362v5h1v-5zM414 363v4h1v-4zM415 363v4h1v-4zM416 364v3h1v-3zM417 361v5h1v-5zM418 361v6h1v-6zM419 364v3h1v-3zM420 360v6h1v-6zM421 360v4h1v-4zM422 362v2h1v-2zM423 362v5h1v-5zM424 359v8h1v-8zM425 359v7h1v-7zM426 364v4h1v-4zM427 363v5h1v-5zM428 362v3h1v-3zM429 362v2h1v-2zM430 362v6h1v-6zM431 360v8h1v-8zM432 360v6h1v-6zM433 359v7h1v-7zM434 359v7h1v-7zM435 364v5h1v-5zM436 367v2h1v-2zM437 364v5h1v-5zM438 362v4h1v-4zM439 362v3h1v-3zM440 361v4h1v-4zM441 361v2h1v-2zM442 361v2h1v-2zM443 361v4h1v-4zM444 361v4h1v-4zM445 361v3h1v-3zM446 362v7h1v-7zM447 365v4h1v-4zM448 365v3h1v-3zM449 366v3h1v-3zM450 361v8h1v-8zM451 361v5h1v-5zM452 364v4h1v-4zM453 362v6h1v-6zM454 362v5h1v-5zM455 365v3h1v-3z" fill="#ff00ff" shape-rendering="crispEdges"/><rect x="456" y="293" width="1" height="134" fill="#f0f0f0"/></svg>
<span class="t " style="left:24.26px;top:122px;font-size:12.5px;line-height:16px;color:#000;transform:scaleX(0.8500);">500</span>
<span class="t " style="left:24.26px;top:149px;font-size:12.5px;line-height:16px;color:#000;transform:scaleX(0.8500);">400</span>
<span class="t " style="left:24.26px;top:176px;font-size:12.5px;line-height:16px;color:#000;transform:scaleX(0.8500);">300</span>
<span class="t " style="left:24.26px;top:202px;font-size:12.5px;line-height:16px;color:#000;transform:scaleX(0.8500);">200</span>
<span class="t " style="left:24.26px;top:229px;font-size:12.5px;line-height:16px;color:#000;transform:scaleX(0.8500);">100</span>
<span class="t " style="left:470.70px;top:122px;font-size:12.5px;line-height:16px;color:#000;transform:scaleX(0.8300);">16</span>
<span class="t " style="left:470.70px;top:139px;font-size:12.5px;line-height:16px;color:#000;transform:scaleX(0.8300);">14</span>
<span class="t " style="left:470.70px;top:156px;font-size:12.5px;line-height:16px;color:#000;transform:scaleX(0.8300);">12</span>
<span class="t " style="left:470.70px;top:172px;font-size:12.5px;line-height:16px;color:#000;transform:scaleX(0.8300);">10</span>
<span class="t " style="left:470.70px;top:189px;font-size:12.5px;line-height:16px;color:#000;transform:scaleX(0.8300);">8</span>
<span class="t " style="left:470.70px;top:206px;font-size:12.5px;line-height:16px;color:#000;transform:scaleX(0.8300);">6</span>
<span class="t " style="left:470.70px;top:222px;font-size:12.5px;line-height:16px;color:#000;transform:scaleX(0.8300);">4</span>
<span class="t " style="left:470.70px;top:239px;font-size:12.5px;line-height:16px;color:#000;transform:scaleX(0.8300);">2</span>
<span class="t " style="left:30.21px;top:284px;font-size:12.5px;line-height:16px;color:#000;transform:scaleX(0.8500);">20</span>
<span class="t " style="left:470.70px;top:284px;font-size:12.5px;line-height:16px;color:#000;transform:scaleX(0.8300);">20</span>
<span class="t " style="left:30.21px;top:311px;font-size:12.5px;line-height:16px;color:#000;transform:scaleX(0.8500);">16</span>
<span class="t " style="left:470.70px;top:311px;font-size:12.5px;line-height:16px;color:#000;transform:scaleX(0.8300);">16</span>
<span class="t " style="left:30.21px;top:338px;font-size:12.5px;line-height:16px;color:#000;transform:scaleX(0.8500);">12</span>
<span class="t " style="left:470.70px;top:338px;font-size:12.5px;line-height:16px;color:#000;transform:scaleX(0.8300);">12</span>
<span class="t " style="left:36.05px;top:364px;font-size:12.5px;line-height:16px;color:#000;transform:scaleX(0.8500);">8</span>
<span class="t " style="left:470.70px;top:364px;font-size:12.5px;line-height:16px;color:#000;transform:scaleX(0.8300);">8</span>
<span class="t " style="left:36.05px;top:391px;font-size:12.5px;line-height:16px;color:#000;transform:scaleX(0.8500);">4</span>
<span class="t " style="left:470.70px;top:391px;font-size:12.5px;line-height:16px;color:#000;transform:scaleX(0.8300);">4</span>
<span class="t " style="left:42.80px;top:266px;font-size:12.5px;line-height:16px;color:#000;transform:scaleX(0.8345);">0.0</span>
<span class="t " style="left:42.80px;top:428px;font-size:12.5px;line-height:16px;color:#000;transform:scaleX(0.8345);">0.0</span>
<span class="t " style="left:95.04px;top:266px;font-size:12.5px;line-height:16px;color:#000;transform:scaleX(0.8345);">1.0</span>
<span class="t " style="left:95.04px;top:428px;font-size:12.5px;line-height:16px;color:#000;transform:scaleX(0.8345);">1.0</span>
<span class="t " style="left:147.28px;top:266px;font-size:12.5px;line-height:16px;color:#000;transform:scaleX(0.8345);">2.0</span>
<span class="t " style="left:147.28px;top:428px;font-size:12.5px;line-height:16px;color:#000;transform:scaleX(0.8345);">2.0</span>
<span class="t " style="left:199.52px;top:266px;font-size:12.5px;line-height:16px;color:#000;transform:scaleX(0.8345);">3.0</span>
<span class="t " style="left:199.52px;top:428px;font-size:12.5px;line-height:16px;color:#000;transform:scaleX(0.8345);">3.0</span>
<span class="t " style="left:251.76px;top:266px;font-size:12.5px;line-height:16px;color:#000;transform:scaleX(0.8345);">4.0</span>
<span class="t " style="left:251.76px;top:428px;font-size:12.5px;line-height:16px;color:#000;transform:scaleX(0.8345);">4.0</span>
<span class="t " style="left:304.00px;top:266px;font-size:12.5px;line-height:16px;color:#000;transform:scaleX(0.8345);">5.0</span>
<span class="t " style="left:304.00px;top:428px;font-size:12.5px;line-height:16px;color:#000;transform:scaleX(0.8345);">5.0</span>
<span class="t " style="left:356.24px;top:266px;font-size:12.5px;line-height:16px;color:#000;transform:scaleX(0.8345);">6.0</span>
<span class="t " style="left:356.24px;top:428px;font-size:12.5px;line-height:16px;color:#000;transform:scaleX(0.8345);">6.0</span>
<span class="t " style="left:408.48px;top:266px;font-size:12.5px;line-height:16px;color:#000;transform:scaleX(0.8345);">7.0</span>
<span class="t " style="left:408.48px;top:428px;font-size:12.5px;line-height:16px;color:#000;transform:scaleX(0.8345);">7.0</span>
<span class="t " style="left:460.72px;top:266px;font-size:12.5px;line-height:16px;color:#000;transform:scaleX(0.8345);">8.0</span>
<span class="t " style="left:460.72px;top:428px;font-size:12.5px;line-height:16px;color:#000;transform:scaleX(0.8345);">8.0</span>
<div style="left:492px;top:126px;width:139px;height:1px;background:#fff;"></div>
<div style="left:492px;top:207px;width:139px;height:1px;background:#fff;"></div>
<div style="left:492px;top:126px;width:1px;height:82px;background:#fff;"></div>
<div style="left:630px;top:126px;width:1px;height:82px;background:#fff;"></div>
<div style="left:491px;top:125px;width:139px;height:1px;background:#808080;"></div>
<div style="left:491px;top:206px;width:139px;height:1px;background:#808080;"></div>
<div style="left:491px;top:125px;width:1px;height:82px;background:#808080;"></div>
<div style="left:629px;top:125px;width:1px;height:82px;background:#808080;"></div>
<div style="left:498px;top:121px;width:45px;height:11px;background:#d4d0c8;"></div>
<span class="t " style="left:500.10px;top:118px;font-size:12.5px;line-height:16px;color:#000;transform:scaleX(0.8418);">Disc info</span>
<span class="t " style="left:499.70px;top:132px;font-size:12.5px;line-height:16px;color:#000;transform:scaleX(0.8229);">Type:</span>
<span class="t " style="left:545.30px;top:132px;font-size:12.5px;line-height:16px;color:#000080;transform:scaleX(0.8547);">DVD+R DL</span>
<span class="t " style="left:499.70px;top:149px;font-size:12.5px;line-height:16px;color:#000;transform:scaleX(0.7562);">ID:</span>
<span class="t " style="left:545.30px;top:149px;font-size:12.5px;line-height:16px;color:#000080;transform:scaleX(0.8486);">MKM 003</span>
<span class="t " style="left:499.70px;top:167px;font-size:12.5px;line-height:16px;color:#000;transform:scaleX(0.8134);">Date:</span>
<span class="t " style="left:545.30px;top:167px;font-size:12.5px;line-height:16px;color:#000080;transform:scaleX(0.8495);">27 Jan 2009</span>
<span class="t " style="left:499.70px;top:185px;font-size:12.5px;line-height:16px;color:#000;transform:scaleX(0.8324);">Label:</span>
<span class="t " style="left:545.30px;top:185px;font-size:12.5px;line-height:16px;color:#000080;transform:scaleX(0.7959);">DLB</span>
<div style="left:492px;top:217px;width:139px;height:1px;background:#fff;"></div>
<div style="left:492px;top:419px;width:139px;height:1px;background:#fff;"></div>
<div style="left:492px;top:217px;width:1px;height:203px;background:#fff;"></div>
<div style="left:630px;top:217px;width:1px;height:203px;background:#fff;"></div>
<div style="left:491px;top:216px;width:139px;height:1px;background:#808080;"></div>
<div style="left:491px;top:418px;width:139px;height:1px;background:#808080;"></div>
<div style="left:491px;top:216px;width:1px;height:203px;background:#808080;"></div>
<div style="left:629px;top:216px;width:1px;height:203px;background:#808080;"></div>
<div style="left:498px;top:212px;width:43px;height:11px;background:#d4d0c8;"></div>
<span class="t " style="left:500.00px;top:209px;font-size:12.5px;line-height:16px;color:#000;transform:scaleX(0.8399);">Settings</span>
<div style="left:500px;top:225px;width:84px;height:21px;background:#fff;"></div>
<div style="left:500px;top:225px;width:84px;height:1px;background:#808080;"></div>
<div style="left:500px;top:225px;width:1px;height:21px;background:#808080;"></div>
<div style="left:501px;top:226px;width:82px;height:1px;background:#404040;"></div>
<div style="left:501px;top:226px;width:1px;height:19px;background:#404040;"></div>
<div style="left:500px;top:245px;width:84px;height:1px;background:#fff;"></div>
<div style="left:583px;top:225px;width:1px;height:21px;background:#fff;"></div>
<div style="left:501px;top:244px;width:82px;height:1px;background:#d4d0c8;"></div>
<div style="left:582px;top:226px;width:1px;height:19px;background:#d4d0c8;"></div>
<div style="left:566px;top:227px;width:16px;height:17px;background:#d4d0c8;"></div>
<div style="left:566px;top:227px;width:16px;height:1px;background:#fff;"></div>
<div style="left:566px;top:227px;width:1px;height:17px;background:#fff;"></div>
<div style="left:566px;top:243px;width:16px;height:1px;background:#404040;"></div>
<div style="left:581px;top:227px;width:1px;height:17px;background:#404040;"></div>
<div style="left:567px;top:242px;width:14px;height:1px;background:#808080;"></div>
<div style="left:580px;top:228px;width:1px;height:15px;background:#808080;"></div>
<svg class="a" style="left:570.5px;top:233.5px" width="7" height="4"><path d="M0 0H7L3.5 4Z" fill="#000"/></svg>
<span class="t " style="left:504.10px;top:228px;font-size:12.5px;line-height:16px;color:#000;transform:scaleX(0.8427);">8 X</span>
<div style="left:592px;top:224px;width:23px;height:23px;background:#d4d0c8;"></div>
<div style="left:592px;top:224px;width:23px;height:1px;background:#fff;"></div>
<div style="left:592px;top:224px;width:1px;height:23px;background:#fff;"></div>
<div style="left:592px;top:246px;width:23px;height:1px;background:#404040;"></div>
<div style="left:614px;top:224px;width:1px;height:23px;background:#404040;"></div>
<div style="left:593px;top:245px;width:21px;height:1px;background:#808080;"></div>
<div style="left:613px;top:225px;width:1px;height:21px;background:#808080;"></div>
<svg class="a" style="left:596px;top:227px" width="15" height="16" viewBox="596 227 15 16"><rect x="596.5" y="227.5" width="14" height="15" fill="#f4fff4" stroke="#000"/><path d="M599.5 234.5v-2.2q0-1.3 1.3-1.3h2" fill="none" stroke="#008000" stroke-width="1.1"/><path d="M602.6 228.6l3 2.4-3 2.4z" fill="#008000"/><path d="M606.8 235v2.2q0 1.3-1.3 1.3h-2" fill="none" stroke="#008000" stroke-width="1.1"/><path d="M603.8 236.1l-3 2.4 3 2.4z" fill="#008000"/></svg>
<span class="t " style="left:502.30px;top:255px;font-size:12.5px;line-height:16px;color:#000;transform:scaleX(0.7900);">Start:</span>
<span class="t " style="left:502.30px;top:278px;font-size:12.5px;line-height:16px;color:#000;transform:scaleX(0.7961);">End:</span>
<div style="left:554px;top:251px;width:60px;height:20px;background:#fff;"></div>
<div style="left:554px;top:251px;width:60px;height:1px;background:#808080;"></div>
<div style="left:554px;top:251px;width:1px;height:20px;background:#808080;"></div>
<div style="left:555px;top:252px;width:58px;height:1px;background:#404040;"></div>
<div style="left:555px;top:252px;width:1px;height:18px;background:#404040;"></div>
<div style="left:554px;top:270px;width:60px;height:1px;background:#fff;"></div>
<div style="left:613px;top:251px;width:1px;height:20px;background:#fff;"></div>
<div style="left:555px;top:269px;width:58px;height:1px;background:#d4d0c8;"></div>
<div style="left:612px;top:252px;width:1px;height:18px;background:#d4d0c8;"></div>
<div style="left:554px;top:274px;width:60px;height:20px;background:#fff;"></div>
<div style="left:554px;top:274px;width:60px;height:1px;background:#808080;"></div>
<div style="left:554px;top:274px;width:1px;height:20px;background:#808080;"></div>
<div style="left:555px;top:275px;width:58px;height:1px;background:#404040;"></div>
<div style="left:555px;top:275px;width:1px;height:18px;background:#404040;"></div>
<div style="left:554px;top:293px;width:60px;height:1px;background:#fff;"></div>
<div style="left:613px;top:274px;width:1px;height:20px;background:#fff;"></div>
<div style="left:555px;top:292px;width:58px;height:1px;background:#d4d0c8;"></div>
<div style="left:612px;top:275px;width:1px;height:18px;background:#d4d0c8;"></div>
<span class="t " style="left:557.30px;top:253px;font-size:12.5px;line-height:16px;color:#000;transform:scaleX(0.8300);">0000 MB</span>
<span class="t " style="left:557.30px;top:276px;font-size:12.5px;line-height:16px;color:#000;transform:scaleX(0.8300);">7999 MB</span>
<div style="left:502px;top:296px;width:13px;height:13px;background:#fff;"></div>
<div style="left:502px;top:296px;width:13px;height:1px;background:#808080;"></div>
<div style="left:502px;top:296px;width:1px;height:13px;background:#808080;"></div>
<div style="left:503px;top:297px;width:11px;height:1px;background:#404040;"></div>
<div style="left:503px;top:297px;width:1px;height:11px;background:#404040;"></div>
<div style="left:502px;top:308px;width:13px;height:1px;background:#fff;"></div>
<div style="left:514px;top:296px;width:1px;height:13px;background:#fff;"></div>
<div style="left:503px;top:307px;width:11px;height:1px;background:#d4d0c8;"></div>
<div style="left:513px;top:297px;width:1px;height:11px;background:#d4d0c8;"></div>
<span class="t " style="left:520.20px;top:295px;font-size:12.5px;line-height:16px;color:#000;transform:scaleX(0.8614);">Quick scan</span>
<div style="left:502px;top:314px;width:13px;height:13px;background:#fff;"></div>
<div style="left:502px;top:314px;width:13px;height:1px;background:#808080;"></div>
<div style="left:502px;top:314px;width:1px;height:13px;background:#808080;"></div>
<div style="left:503px;top:315px;width:11px;height:1px;background:#404040;"></div>
<div style="left:503px;top:315px;width:1px;height:11px;background:#404040;"></div>
<div style="left:502px;top:326px;width:13px;height:1px;background:#fff;"></div>
<div style="left:514px;top:314px;width:1px;height:13px;background:#fff;"></div>
<div style="left:503px;top:325px;width:11px;height:1px;background:#d4d0c8;"></div>
<div style="left:513px;top:315px;width:1px;height:11px;background:#d4d0c8;"></div>
<svg class="a" style="left:505px;top:317px" width="7" height="7"><path d="M0 2v3l2 2 5-5v-3l-5 5z" fill="#000" shape-rendering="crispEdges"/></svg>
<span class="t " style="left:520.20px;top:313px;font-size:12.5px;line-height:16px;color:#000;transform:scaleX(0.8497);">Show C1/PIE</span>
<div style="left:502px;top:329px;width:13px;height:13px;background:#fff;"></div>
<div style="left:502px;top:329px;width:13px;height:1px;background:#808080;"></div>
<div style="left:502px;top:329px;width:1px;height:13px;background:#808080;"></div>
<div style="left:503px;top:330px;width:11px;height:1px;background:#404040;"></div>
<div style="left:503px;top:330px;width:1px;height:11px;background:#404040;"></div>
<div style="left:502px;top:341px;width:13px;height:1px;background:#fff;"></div>
<div style="left:514px;top:329px;width:1px;height:13px;background:#fff;"></div>
<div style="left:503px;top:340px;width:11px;height:1px;background:#d4d0c8;"></div>
<div style="left:513px;top:330px;width:1px;height:11px;background:#d4d0c8;"></div>
<svg class="a" style="left:505px;top:332px" width="7" height="7"><path d="M0 2v3l2 2 5-5v-3l-5 5z" fill="#000" shape-rendering="crispEdges"/></svg>
<span class="t " style="left:520.20px;top:328px;font-size:12.5px;line-height:16px;color:#000;transform:scaleX(0.8380);">Show C2/PIF</span>
<div style="left:502px;top:345px;width:13px;height:13px;background:#fff;"></div>
<div style="left:502px;top:345px;width:13px;height:1px;background:#808080;"></div>
<div style="left:502px;top:345px;width:1px;height:13px;background:#808080;"></div>
<div style="left:503px;top:346px;width:11px;height:1px;background:#404040;"></div>
<div style="left:503px;top:346px;width:1px;height:11px;background:#404040;"></div>
<div style="left:502px;top:357px;width:13px;height:1px;background:#fff;"></div>
<div style="left:514px;top:345px;width:1px;height:13px;background:#fff;"></div>
<div style="left:503px;top:356px;width:11px;height:1px;background:#d4d0c8;"></div>
<div style="left:513px;top:346px;width:1px;height:11px;background:#d4d0c8;"></div>
<svg class="a" style="left:505px;top:348px" width="7" height="7"><path d="M0 2v3l2 2 5-5v-3l-5 5z" fill="#000" shape-rendering="crispEdges"/></svg>
<span class="t " style="left:520.20px;top:344px;font-size:12.5px;line-height:16px;color:#000;transform:scaleX(0.8343);">Show jitter</span>
<div style="left:502px;top:361px;width:13px;height:13px;background:#fff;"></div>
<div style="left:502px;top:361px;width:13px;height:1px;background:#808080;"></div>
<div style="left:502px;top:361px;width:1px;height:13px;background:#808080;"></div>
<div style="left:503px;top:362px;width:11px;height:1px;background:#404040;"></div>
<div style="left:503px;top:362px;width:1px;height:11px;background:#404040;"></div>
<div style="left:502px;top:373px;width:13px;height:1px;background:#fff;"></div>
<div style="left:514px;top:361px;width:1px;height:13px;background:#fff;"></div>
<div style="left:503px;top:372px;width:11px;height:1px;background:#d4d0c8;"></div>
<div style="left:513px;top:362px;width:1px;height:11px;background:#d4d0c8;"></div>
<svg class="a" style="left:505px;top:364px" width="7" height="7"><path d="M0 2v3l2 2 5-5v-3l-5 5z" fill="#000" shape-rendering="crispEdges"/></svg>
<span class="t " style="left:520.20px;top:360px;font-size:12.5px;line-height:16px;color:#000;transform:scaleX(0.8452);">Show read speed</span>
<div style="left:502px;top:376px;width:13px;height:13px;background:#d4d0c8;"></div>
<div style="left:502px;top:376px;width:13px;height:1px;background:#808080;"></div>
<div style="left:502px;top:376px;width:1px;height:13px;background:#808080;"></div>
<div style="left:503px;top:377px;width:11px;height:1px;background:#404040;"></div>
<div style="left:503px;top:377px;width:1px;height:11px;background:#404040;"></div>
<div style="left:502px;top:388px;width:13px;height:1px;background:#fff;"></div>
<div style="left:514px;top:376px;width:1px;height:13px;background:#fff;"></div>
<div style="left:503px;top:387px;width:11px;height:1px;background:#d4d0c8;"></div>
<div style="left:513px;top:377px;width:1px;height:11px;background:#d4d0c8;"></div>
<svg class="a" style="left:505px;top:379px" width="7" height="7"><path d="M0 2v3l2 2 5-5v-3l-5 5z" fill="#808080" shape-rendering="crispEdges"/></svg>
<span class="t " style="left:521.20px;top:376px;font-size:12.5px;line-height:16px;color:#fff;transform:scaleX(0.8446);">Show write speed</span>
<span class="t " style="left:520.20px;top:375px;font-size:12.5px;line-height:16px;color:#808080;transform:scaleX(0.8446);">Show write speed</span>
<div style="left:527px;top:393px;width:98px;height:23px;background:#d4d0c8;"></div>
<div style="left:527px;top:393px;width:98px;height:1px;background:#fff;"></div>
<div style="left:527px;top:393px;width:1px;height:23px;background:#fff;"></div>
<div style="left:527px;top:415px;width:98px;height:1px;background:#404040;"></div>
<div style="left:624px;top:393px;width:1px;height:23px;background:#404040;"></div>
<div style="left:528px;top:414px;width:96px;height:1px;background:#808080;"></div>
<div style="left:623px;top:394px;width:1px;height:21px;background:#808080;"></div>
<span class="t " style="left:550.30px;top:396px;font-size:12.5px;line-height:16px;color:#000;transform:scaleX(0.8917);">Advanced</span>
<div style="left:492px;top:426px;width:139px;height:1px;background:#fff;"></div>
<div style="left:492px;top:451px;width:139px;height:1px;background:#fff;"></div>
<div style="left:492px;top:426px;width:1px;height:26px;background:#fff;"></div>
<div style="left:630px;top:426px;width:1px;height:26px;background:#fff;"></div>
<div style="left:491px;top:425px;width:139px;height:1px;background:#808080;"></div>
<div style="left:491px;top:450px;width:139px;height:1px;background:#808080;"></div>
<div style="left:491px;top:425px;width:1px;height:26px;background:#808080;"></div>
<div style="left:629px;top:425px;width:1px;height:26px;background:#808080;"></div>
<span class="t " style="left:502.10px;top:431px;font-size:12.5px;line-height:16px;color:#000;transform:scaleX(0.8170);">Quality score:</span>
<span class="t " style="left:607.80px;top:431px;font-size:12.5px;line-height:16px;color:#000080;transform:scaleX(0.8577);">94</span>
<div style="left:492px;top:458px;width:139px;height:1px;background:#fff;"></div>
<div style="left:492px;top:513px;width:139px;height:1px;background:#fff;"></div>
<div style="left:492px;top:458px;width:1px;height:56px;background:#fff;"></div>
<div style="left:630px;top:458px;width:1px;height:56px;background:#fff;"></div>
<div style="left:491px;top:457px;width:139px;height:1px;background:#808080;"></div>
<div style="left:491px;top:512px;width:139px;height:1px;background:#808080;"></div>
<div style="left:491px;top:457px;width:1px;height:56px;background:#808080;"></div>
<div style="left:629px;top:457px;width:1px;height:56px;background:#808080;"></div>
<span class="t " style="left:502.10px;top:465px;font-size:12.5px;line-height:16px;color:#000;transform:scaleX(0.7963);">Progress:</span>
<span class="t " style="left:591.70px;top:465px;font-size:12.5px;line-height:16px;color:#000080;transform:scaleX(0.8113);">100 %</span>
<span class="t " style="left:502.10px;top:481px;font-size:12.5px;line-height:16px;color:#000;transform:scaleX(0.8125);">Position:</span>
<span class="t " style="left:578.30px;top:481px;font-size:12.5px;line-height:16px;color:#000080;transform:scaleX(0.8440);">7998 MB</span>
<span class="t " style="left:502.10px;top:496px;font-size:12.5px;line-height:16px;color:#000;transform:scaleX(0.8076);">Speed:</span>
<span class="t " style="left:590.00px;top:496px;font-size:12.5px;line-height:16px;color:#000080;transform:scaleX(0.8443);">3.34 X</span>
<div style="left:15px;top:458px;width:146px;height:1px;background:#fff;"></div>
<div style="left:15px;top:514px;width:146px;height:1px;background:#fff;"></div>
<div style="left:15px;top:458px;width:1px;height:57px;background:#fff;"></div>
<div style="left:160px;top:458px;width:1px;height:57px;background:#fff;"></div>
<div style="left:14px;top:457px;width:146px;height:1px;background:#808080;"></div>
<div style="left:14px;top:513px;width:146px;height:1px;background:#808080;"></div>
<div style="left:14px;top:457px;width:1px;height:57px;background:#808080;"></div>
<div style="left:159px;top:457px;width:1px;height:57px;background:#808080;"></div>
<div style="left:23px;top:452px;width:54px;height:12px;background:#d4d0c8;"></div>
<div style="left:23px;top:453px;width:9px;height:9px;background:#000;"></div>
<div style="left:24px;top:454px;width:7px;height:7px;background:#00ffff;"></div>
<span class="t " style="left:35.40px;top:450px;font-size:12.5px;line-height:16px;color:#000;transform:scaleX(0.7939);">PI Errors</span>
<span class="t " style="left:22.10px;top:466px;font-size:12.5px;line-height:16px;color:#000;transform:scaleX(0.8362);">Average:</span>
<span class="t " style="left:123.50px;top:466px;font-size:12.5px;line-height:16px;color:#000080;transform:scaleX(0.8320);">15.41</span>
<span class="t " style="left:22.10px;top:481px;font-size:12.5px;line-height:16px;color:#000;transform:scaleX(0.7913);">Maximum:</span>
<span class="t " style="left:132.40px;top:481px;font-size:12.5px;line-height:16px;color:#000080;transform:scaleX(0.8192);">326</span>
<span class="t " style="left:22.10px;top:496px;font-size:12.5px;line-height:16px;color:#000;transform:scaleX(0.8669);">Total:</span>
<span class="t " style="left:114.50px;top:496px;font-size:12.5px;line-height:16px;color:#000080;transform:scaleX(0.8383);">492934</span>
<div style="left:173px;top:458px;width:146px;height:1px;background:#fff;"></div>
<div style="left:173px;top:514px;width:146px;height:1px;background:#fff;"></div>
<div style="left:173px;top:458px;width:1px;height:57px;background:#fff;"></div>
<div style="left:318px;top:458px;width:1px;height:57px;background:#fff;"></div>
<div style="left:172px;top:457px;width:146px;height:1px;background:#808080;"></div>
<div style="left:172px;top:513px;width:146px;height:1px;background:#808080;"></div>
<div style="left:172px;top:457px;width:1px;height:57px;background:#808080;"></div>
<div style="left:317px;top:457px;width:1px;height:57px;background:#808080;"></div>
<div style="left:181px;top:452px;width:63px;height:12px;background:#d4d0c8;"></div>
<div style="left:182px;top:453px;width:9px;height:9px;background:#000;"></div>
<div style="left:183px;top:454px;width:7px;height:7px;background:#ffff00;"></div>
<span class="t " style="left:193.10px;top:450px;font-size:12.5px;line-height:16px;color:#000;transform:scaleX(0.8100);">PI Failures</span>
<span class="t " style="left:180.90px;top:466px;font-size:12.5px;line-height:16px;color:#000;transform:scaleX(0.8442);">Average:</span>
<span class="t " style="left:288.10px;top:466px;font-size:12.5px;line-height:16px;color:#000080;transform:scaleX(0.7959);">0.01</span>
<span class="t " style="left:180.90px;top:481px;font-size:12.5px;line-height:16px;color:#000;transform:scaleX(0.7965);">Maximum:</span>
<span class="t " style="left:297.70px;top:481px;font-size:12.5px;line-height:16px;color:#000080;transform:scaleX(0.6923);">11</span>
<span class="t " style="left:180.90px;top:496px;font-size:12.5px;line-height:16px;color:#000;transform:scaleX(0.8770);">Total:</span>
<span class="t " style="left:285.50px;top:496px;font-size:12.5px;line-height:16px;color:#000080;transform:scaleX(0.8288);">1960</span>
<div style="left:332px;top:458px;width:148px;height:1px;background:#fff;"></div>
<div style="left:332px;top:500px;width:148px;height:1px;background:#fff;"></div>
<div style="left:332px;top:458px;width:1px;height:43px;background:#fff;"></div>
<div style="left:479px;top:458px;width:1px;height:43px;background:#fff;"></div>
<div style="left:331px;top:457px;width:148px;height:1px;background:#808080;"></div>
<div style="left:331px;top:499px;width:148px;height:1px;background:#808080;"></div>
<div style="left:331px;top:457px;width:1px;height:43px;background:#808080;"></div>
<div style="left:478px;top:457px;width:1px;height:43px;background:#808080;"></div>
<div style="left:340px;top:452px;width:36px;height:12px;background:#d4d0c8;"></div>
<div style="left:341px;top:453px;width:9px;height:9px;background:#000;"></div>
<div style="left:342px;top:454px;width:7px;height:7px;background:#ff00ff;"></div>
<span class="t " style="left:351.70px;top:450px;font-size:12.5px;line-height:16px;color:#000;transform:scaleX(0.7926);">Jitter</span>
<span class="t " style="left:340.10px;top:466px;font-size:12.5px;line-height:16px;color:#000;transform:scaleX(0.8382);">Average:</span>
<span class="t " style="left:436.00px;top:466px;font-size:12.5px;line-height:16px;color:#000080;transform:scaleX(0.8206);">9.72 %</span>
<span class="t " style="left:340.10px;top:481px;font-size:12.5px;line-height:16px;color:#000;transform:scaleX(0.7965);">Maximum:</span>
<span class="t " style="left:435.30px;top:481px;font-size:12.5px;line-height:16px;color:#000080;transform:scaleX(0.8386);">13.6 %</span>
<span class="t " style="left:340.30px;top:499px;font-size:12.5px;line-height:16px;color:#000;transform:scaleX(0.8077);">PO failures:</span>
<span class="t " style="left:462.30px;top:499px;font-size:12.5px;line-height:16px;color:#000080;transform:scaleX(0.8000);">0</span>
</div>
</body></html>
